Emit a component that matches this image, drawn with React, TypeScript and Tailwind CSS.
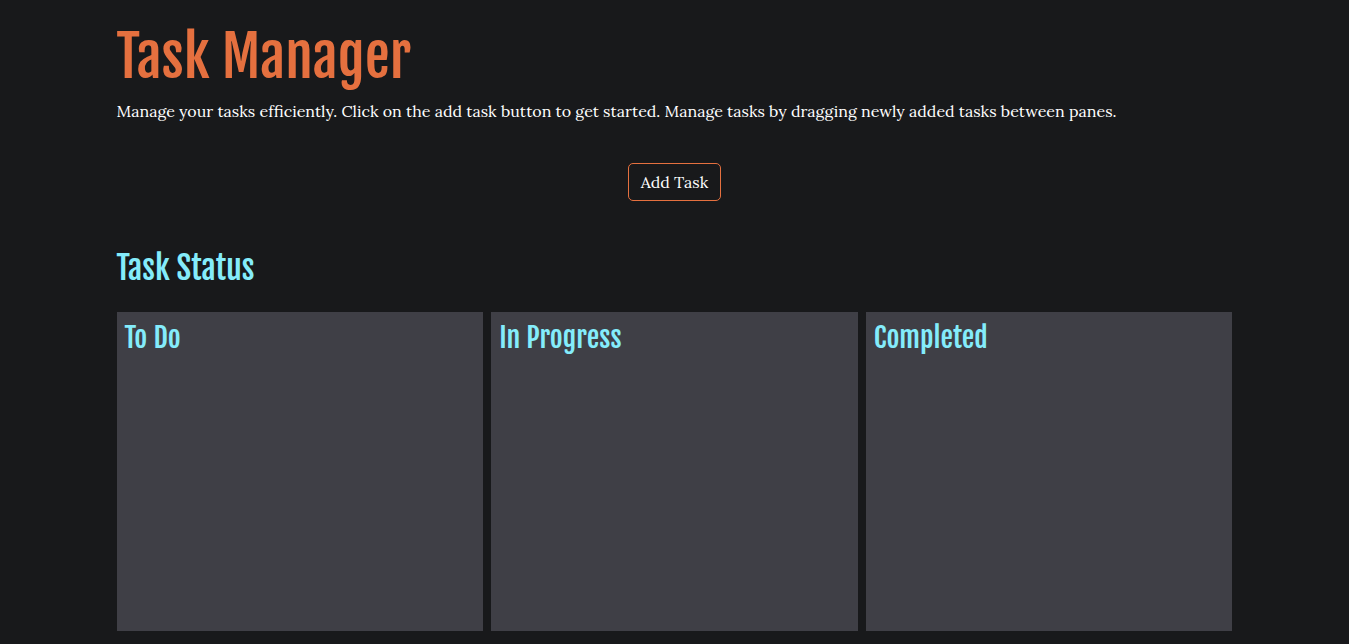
const heading = "font-['Fjalla_One','DejaVu_Sans',sans-serif] font-normal";
const body = "font-['Lora','DejaVu_Serif','Liberation_Serif',serif]";

function Pane({ title }: { title: string }) {
  return (
    <div className="bg-[#3f3f46] h-[319px] px-2 pt-[9px]">
      <h3 className={`${heading} text-[#84ecfb] text-[28px] leading-[1.2]`}>{title}</h3>
    </div>
  );
}

export default function App() {
  return (
    <div className="min-h-screen bg-[#18191b] text-white">
      <div className="w-[1116px] mx-auto pt-[24px]">
        <h1 className={`${heading} text-[#e5703f] text-[56px] leading-[1.2]`}>Task Manager</h1>
        <p className={`${body} text-[16px] mt-[8px]`}>
          Manage your tasks efficiently. Click on the add task button to get started. Manage tasks by dragging newly added tasks between panes.
        </p>
        <div className="flex justify-center mt-[40px]">
          <button className={`${body} border border-[#e5703f] rounded-[5px] px-3 h-[38px] text-[16px]`}>Add Task</button>
        </div>
        <h2 className={`${heading} text-[#84ecfb] text-[32px] leading-[1.2] mt-[48px]`}>Task Status</h2>
        <div className="grid grid-cols-3 gap-2 mt-[24px]">
          <Pane title="To Do" />
          <Pane title="In Progress" />
          <Pane title="Completed" />
        </div>
      </div>
    </div>
  );
}
